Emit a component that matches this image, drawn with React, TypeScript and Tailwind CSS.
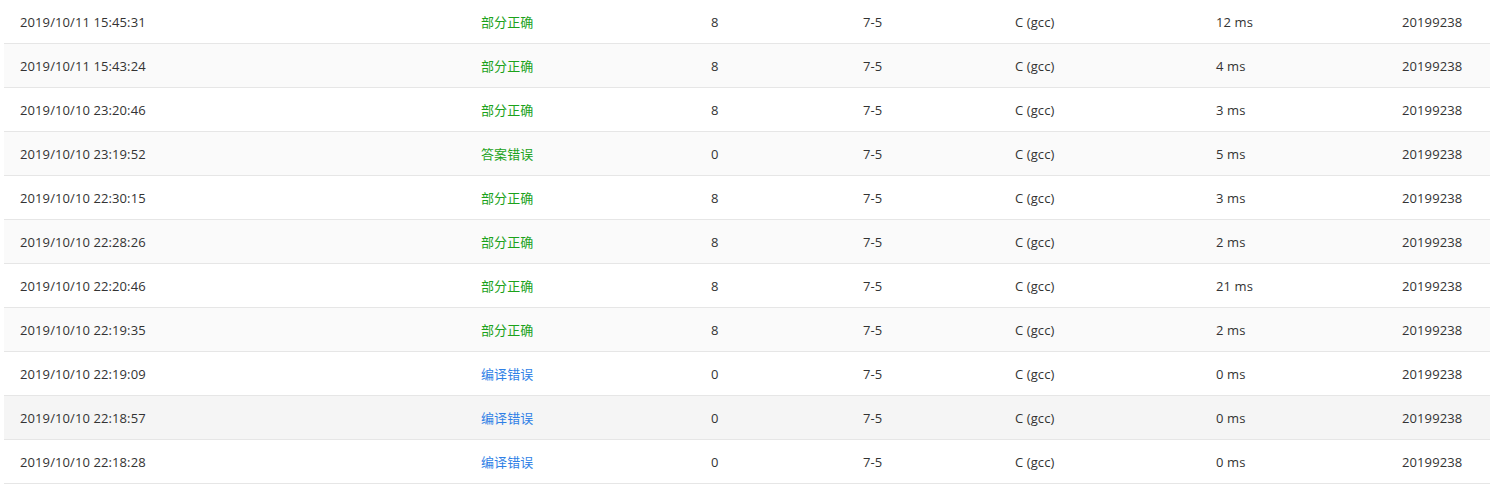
import React from "react";

type Row = {
  time: string;
  status: string;
  score: string;
  problem: string;
  lang: string;
  cost: string;
  user: string;
};

const rows: Row[] = [
  { time: "2019/10/11 15:45:31", status: "部分正确", score: "8", problem: "7-5", lang: "C (gcc)", cost: "12 ms", user: "20199238" },
  { time: "2019/10/11 15:43:24", status: "部分正确", score: "8", problem: "7-5", lang: "C (gcc)", cost: "4 ms", user: "20199238" },
  { time: "2019/10/10 23:20:46", status: "部分正确", score: "8", problem: "7-5", lang: "C (gcc)", cost: "3 ms", user: "20199238" },
  { time: "2019/10/10 23:19:52", status: "答案错误", score: "0", problem: "7-5", lang: "C (gcc)", cost: "5 ms", user: "20199238" },
  { time: "2019/10/10 22:30:15", status: "部分正确", score: "8", problem: "7-5", lang: "C (gcc)", cost: "3 ms", user: "20199238" },
  { time: "2019/10/10 22:28:26", status: "部分正确", score: "8", problem: "7-5", lang: "C (gcc)", cost: "2 ms", user: "20199238" },
  { time: "2019/10/10 22:20:46", status: "部分正确", score: "8", problem: "7-5", lang: "C (gcc)", cost: "21 ms", user: "20199238" },
  { time: "2019/10/10 22:19:35", status: "部分正确", score: "8", problem: "7-5", lang: "C (gcc)", cost: "2 ms", user: "20199238" },
  { time: "2019/10/10 22:19:09", status: "编译错误", score: "0", problem: "7-5", lang: "C (gcc)", cost: "0 ms", user: "20199238" },
  { time: "2019/10/10 22:18:57", status: "编译错误", score: "0", problem: "7-5", lang: "C (gcc)", cost: "0 ms", user: "20199238" },
  { time: "2019/10/10 22:18:28", status: "编译错误", score: "0", problem: "7-5", lang: "C (gcc)", cost: "0 ms", user: "20199238" },
];

// 状态颜色：编译错误是蓝色，其余绿色
const statusColor = (s: string) =>
  s === "编译错误" ? "text-[#2f7fe6]" : "text-[#1ba21b]";

const rowBg = (i: number) => {
  if (i === 9) return "bg-[#f5f5f5]"; // hover 行
  return i % 2 === 1 ? "bg-[#fafafa]" : "bg-white";
};

const App = () => {
  return (
    <div
      className="w-[1491px] h-[486px] bg-white pl-[4px] text-[13px] tracking-[0.1px] text-[#333]"
      style={{ fontFamily: '"Open Sans", "Noto Sans CJK SC", sans-serif' }}
    >
      <div className="w-[1486px]">
        {rows.map((r, i) => (
          <div
            key={i}
            className={`grid grid-cols-[461px_230px_152px_152px_201px_186px_1fr] h-[44px] pt-[2px] items-center border-b border-[#e6e6e6] ${rowBg(i)}`}
          >
            <div className="pl-4">{r.time}</div>
            <div className={`pl-4 ${statusColor(r.status)}`}>{r.status}</div>
            <div className="pl-4">{r.score}</div>
            <div className="pl-4">{r.problem}</div>
            <div className="pl-4">{r.lang}</div>
            <div className="pl-4">{r.cost}</div>
            <div className="pl-4">{r.user}</div>
          </div>
        ))}
      </div>
    </div>
  );
};

export default App;
